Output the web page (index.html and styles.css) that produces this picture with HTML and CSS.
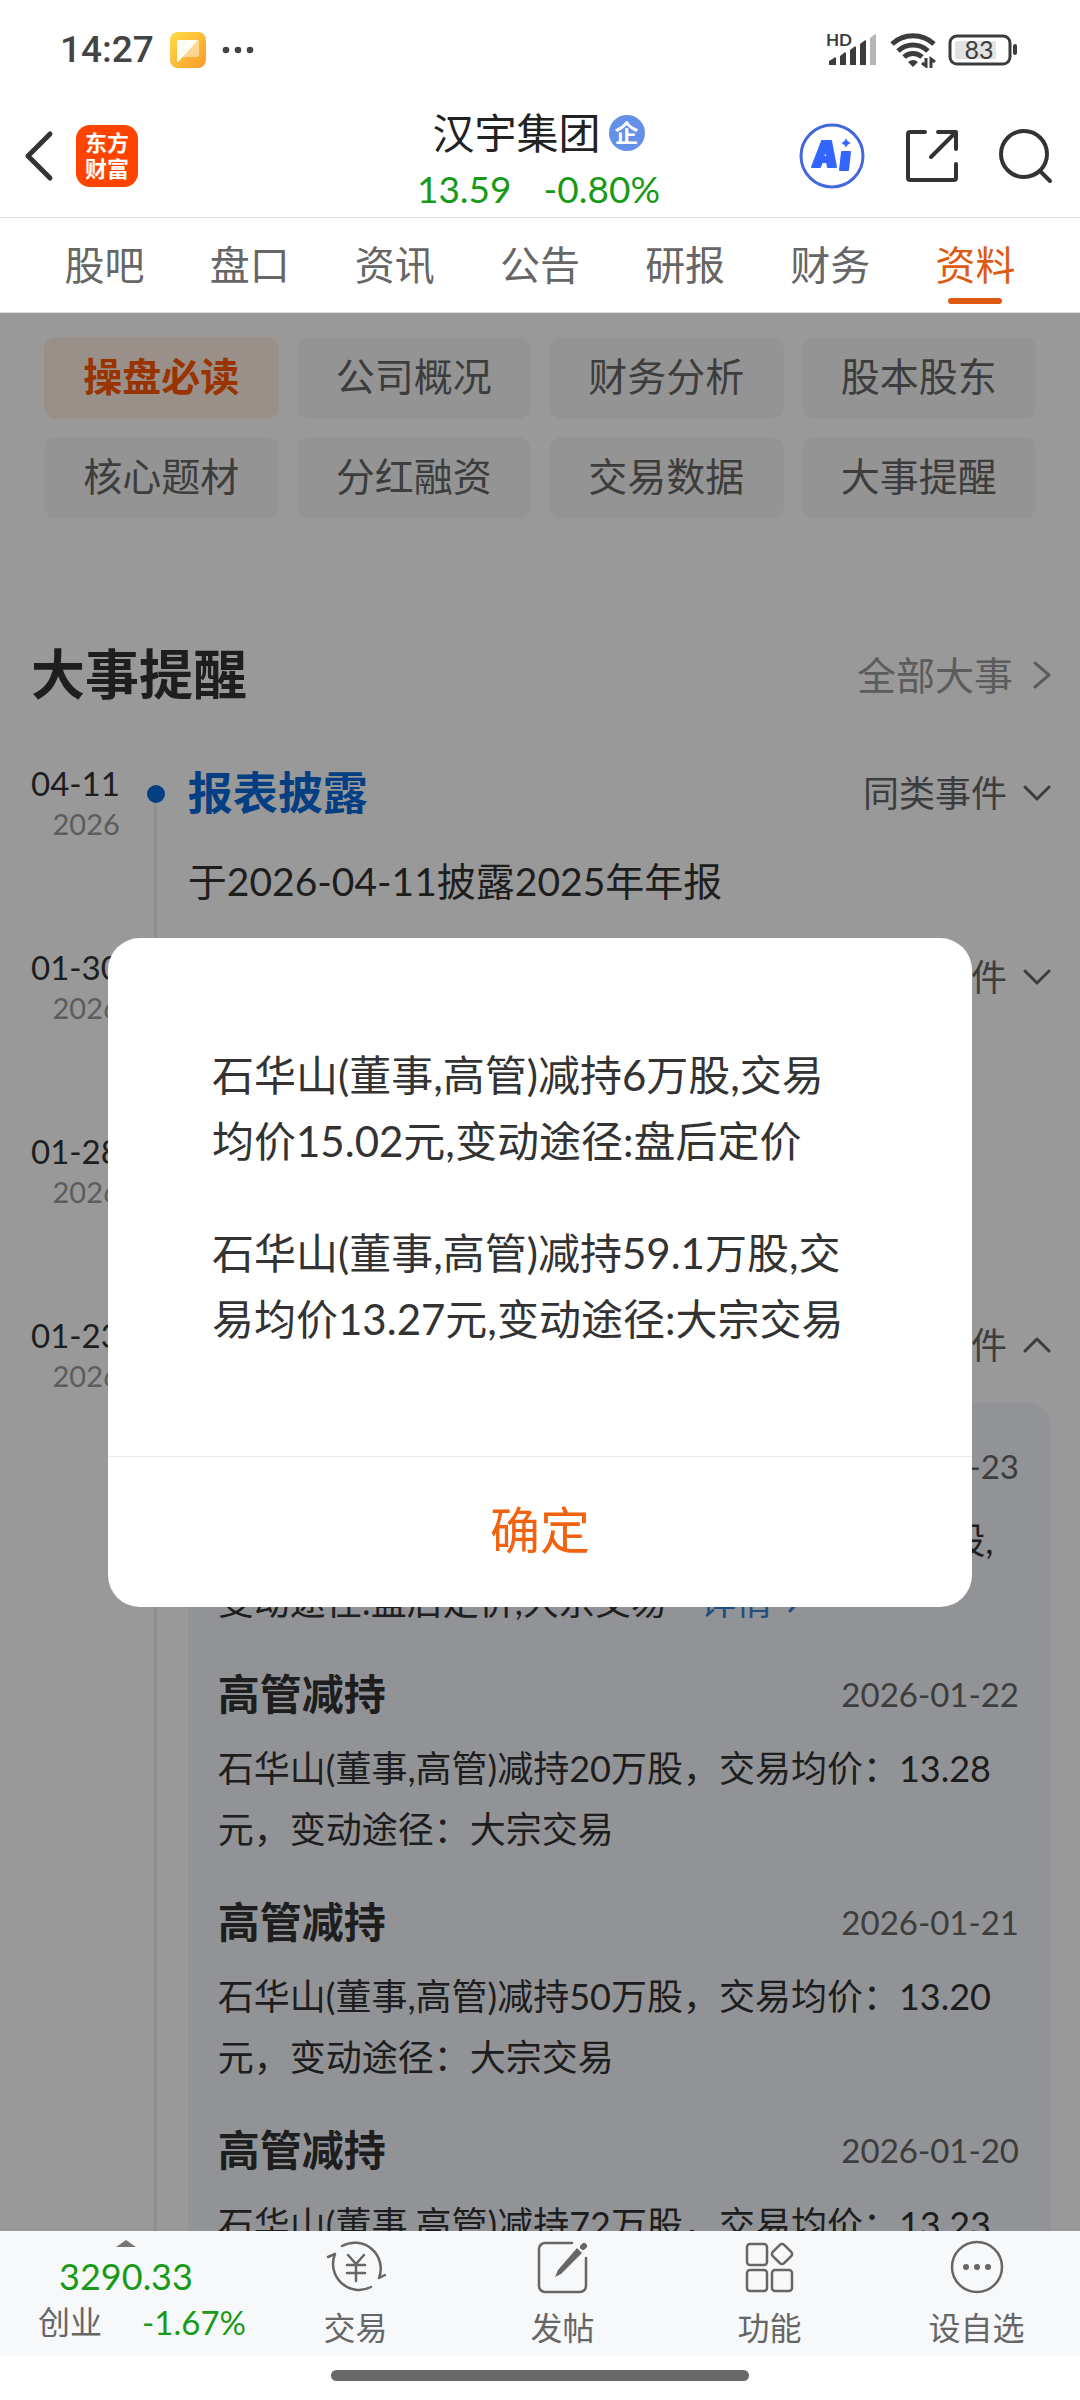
FILE: index.html
```
<!DOCTYPE html>
<html lang="zh-CN">
<head>
    <meta charset="UTF-8">
    <meta name="viewport" content="width=device-width, initial-scale=1.0">
    <title>汉宇集团 - 资料</title>
    <link rel="stylesheet" href="styles.css">
</head>
<body>
    <div class="status-bar">
        <span class="clock">14:27</span>
        <svg class="app-icon" width="36" height="36" viewBox="0 0 36 36">
            <defs>
                <linearGradient id="noteBg" x1="0" y1="0" x2="1" y2="1">
                    <stop offset="0" stop-color="#fddc45"/>
                    <stop offset="1" stop-color="#fd9a2b"/>
                </linearGradient>
            </defs>
            <rect width="36" height="36" rx="8" fill="url(#noteBg)"/>
            <path d="M9 8h18a2 2 0 0 1 2 2v13a2 2 0 0 1-2 2H13l-4 4a1 1 0 0 1-2-1V10a2 2 0 0 1 2-2z" fill="#fff" opacity=".45"/>
            <path d="M9 8h19L9 29a1 1 0 0 1-2-1V10a2 2 0 0 1 2-2z" fill="#fff" opacity=".9"/>
        </svg>
        <svg width="32" height="8" viewBox="0 0 32 8" fill="#444">
            <circle cx="4" cy="4" r="3.3"/><circle cx="16" cy="4" r="3.3"/><circle cx="28" cy="4" r="3.3"/>
        </svg>
        <div class="status-right">
            <svg width="52" height="36" viewBox="0 0 52 36" fill="#3c3c3c">
                <text x="0" y="14" font-size="17" font-weight="700">HD</text>
                <path d="M3 29l5-3a1 1 0 0 1 2 1v6H3z"/>
                <path d="M14 24l4-3a1 1 0 0 1 2 1v11h-6z"/>
                <path d="M24 18l4-3a1 1 0 0 1 2 1v17h-6z"/>
                <path d="M34 12l4-3a1 1 0 0 1 2 1v23h-6z"/>
                <path d="M44 6l4-3a1 1 0 0 1 2 1v29h-6z" fill="#b5b5b5"/>
            </svg>
            <svg width="46" height="36" viewBox="0 0 46 36" fill="none" stroke="#3c3c3c" stroke-width="5">
                <path d="M2 12a31 31 0 0 1 42 0"/>
                <path d="M8 19a22 22 0 0 1 30 0"/>
                <path d="M14 25a13 13 0 0 1 18 0"/>
                <path d="M18 30q5-4 10 0l-5 5z" fill="#3c3c3c" stroke="none"/>
                <path d="M32 31l4 3V26M45 30l-4-3V36" stroke-width="3"/>
            </svg>
            <svg width="70" height="32" viewBox="0 0 70 32">
                <rect x="2" y="2" width="60" height="28" rx="7" fill="none" stroke="#3c3c3c" stroke-width="3"/>
                <rect x="7" y="7" width="41" height="18" rx="2" fill="#e2e2e2"/>
                <rect x="65" y="10" width="4" height="11" rx="2" fill="#3c3c3c"/>
                <text x="31" y="25" font-size="25" text-anchor="middle" fill="#3c3c3c">83</text>
            </svg>
        </div>
    </div>

    <header class="header">
        <div class="header-left">
            <button type="button" class="icon-btn" aria-label="返回">
                <svg width="30" height="52" viewBox="0 0 30 52" fill="none" stroke="#333" stroke-width="5" stroke-linecap="round" stroke-linejoin="round">
                    <path d="M26 4L4 26l22 22"/>
                </svg>
            </button>
            <a href="#" class="logo"><span>东方</span><span>财富</span></a>
        </div>
        <div class="stock">
            <h1 class="stock-name">汉宇集团<span class="badge">企</span></h1>
            <div class="stock-price"><span>13.59</span><span>-0.80%</span></div>
        </div>
        <div class="header-right">
            <button type="button" class="icon-btn" aria-label="AI">
                <svg width="66" height="68" viewBox="0 0 66 68">
                    <circle cx="33" cy="34" r="31" fill="none" stroke="#4468e0" stroke-width="3"/>
                    <path d="M23 19h9l5 26h-8l-1-5h-5l-2 5h-8zM27 27l-3 8h4zM43 30h8l-2 18h-8z" fill="#3366ff" fill-rule="evenodd" stroke="#3366ff" stroke-width="2" stroke-linejoin="round"/>
                    <path d="M47 16q1 4 5 5q-4 1-5 5q-1-4-5-5q4-1 5-5z" fill="#3366ff"/>
                </svg>
            </button>
            <button type="button" class="icon-btn" aria-label="分享">
                <svg width="54" height="54" viewBox="0 0 54 54" fill="none" stroke="#333" stroke-width="4" stroke-linecap="round" stroke-linejoin="round">
                    <path d="M20 3H5a2 2 0 0 0-2 2v44a2 2 0 0 0 2 2h44a2 2 0 0 0 2-2V35"/>
                    <path d="M33 3h18v17M51 3L26 28"/>
                </svg>
            </button>
            <button type="button" class="icon-btn" aria-label="搜索">
                <svg width="54" height="56" viewBox="0 0 54 56" fill="none" stroke="#333" stroke-width="4" stroke-linecap="round">
                    <circle cx="25" cy="26" r="23"/>
                    <path d="M41 43l10 10"/>
                </svg>
            </button>
        </div>
    </header>

    <nav class="tabs">
        <a href="#">股吧</a>
        <a href="#">盘口</a>
        <a href="#">资讯</a>
        <a href="#">公告</a>
        <a href="#">研报</a>
        <a href="#">财务</a>
        <a href="#" class="active">资料</a>
    </nav>

    <main class="content">
        <div class="chips">
            <button type="button" class="chip active">操盘必读</button>
            <button type="button" class="chip">公司概况</button>
            <button type="button" class="chip">财务分析</button>
            <button type="button" class="chip">股本股东</button>
            <button type="button" class="chip">核心题材</button>
            <button type="button" class="chip">分红融资</button>
            <button type="button" class="chip">交易数据</button>
            <button type="button" class="chip">大事提醒</button>
        </div>

        <div class="section-head">
            <h2>大事提醒</h2>
            <a href="#" class="more">全部大事
                <svg width="18" height="28" viewBox="0 0 18 28" class="stroke-icon"><path d="M2 2l14 12L2 26"/></svg>
            </a>
        </div>

        <ol class="timeline">
            <li class="event">
                <div class="event-date"><time>04-11</time><small>2026</small></div>
                <div class="axis"></div>
                <div class="event-body">
                    <div class="event-head">
                        <h3>报表披露</h3>
                        <button type="button" class="toggle">同类事件
                            <svg width="28" height="18" viewBox="0 0 28 18" class="stroke-icon"><path d="M2 3l12 12L26 3"/></svg>
                        </button>
                    </div>
                    <p>于2026-04-11披露2025年年报</p>
                </div>
            </li>
            <li class="event">
                <div class="event-date"><time>01-30</time><small>2026</small></div>
                <div class="axis"></div>
                <div class="event-body">
                    <div class="event-head">
                        <h3>业绩预告</h3>
                        <button type="button" class="toggle">同类事件
                            <svg width="28" height="18" viewBox="0 0 28 18" class="stroke-icon"><path d="M2 3l12 12L26 3"/></svg>
                        </button>
                    </div>
                    <p>披露2025年年报业绩预告</p>
                </div>
            </li>
            <li class="event">
                <div class="event-date"><time>01-28</time><small>2026</small></div>
                <div class="axis"></div>
                <div class="event-body">
                    <div class="event-head"><h3>股东大会</h3></div>
                    <p>召开临时股东大会</p>
                </div>
            </li>
            <li class="event">
                <div class="event-date"><time>01-23</time><small>2026</small></div>
                <div class="axis"></div>
                <div class="event-body">
                    <div class="event-head">
                        <h3>高管减持</h3>
                        <button type="button" class="toggle">同类事件
                            <svg width="28" height="18" viewBox="0 0 28 18" class="stroke-icon"><path d="M2 15L14 3l12 12"/></svg>
                        </button>
                    </div>
                    <div class="panel">
                        <article>
                            <header><h4>高管减持</h4><time>2026-01-23</time></header>
                            <p>石华山(董事,高管)当日通过2种途径减持65.1万股,<br>变动途径:盘后定价,大宗交易
                                <a href="#" class="detail">详情
                                    <svg width="12" height="22" viewBox="0 0 12 22" class="stroke-icon"><path d="M2 2l8 9-8 9"/></svg>
                                </a>
                            </p>
                        </article>
                        <article>
                            <header><h4>高管减持</h4><time>2026-01-22</time></header>
                            <p>石华山(董事,高管)减持20万股，交易均价：13.28元，变动途径：大宗交易</p>
                        </article>
                        <article>
                            <header><h4>高管减持</h4><time>2026-01-21</time></header>
                            <p>石华山(董事,高管)减持50万股，交易均价：13.20元，变动途径：大宗交易</p>
                        </article>
                        <article>
                            <header><h4>高管减持</h4><time>2026-01-20</time></header>
                            <p>石华山(董事,高管)减持72万股，交易均价：13.23元，变动途径：大宗交易</p>
                        </article>
                    </div>
                </div>
            </li>
        </ol>

        <div class="overlay">
            <div class="dialog" role="dialog" aria-modal="true">
                <div class="dialog-text">
                    <p>石华山(董事,高管)减持6万股,交易均价15.02元,变动途径:盘后定价</p>
                    <p>石华山(董事,高管)减持59.1万股,交易均价13.27元,变动途径:大宗交易</p>
                </div>
                <button type="button" class="confirm">确定</button>
            </div>
        </div>
    </main>

    <footer class="bottom-bar">
        <a href="#" class="index">
            <svg width="20" height="7" viewBox="0 0 20 7"><path d="M10 0l10 7H0z" fill="#777"/></svg>
            <strong>3290.33</strong>
            <span class="index-row"><span>创业</span><em>-1.67%</em></span>
        </a>
        <a href="#" class="bar-item">
            <svg width="60" height="56" viewBox="0 0 60 56" fill="none" stroke="#666" stroke-width="2.500" stroke-linecap="round" stroke-linejoin="round">
                <path d="M16 7A26 26 0 0 1 53 39l6-3"/>
                <path d="M45 48A26 26 0 0 1 9 15l-7 3"/>
                <path d="M22 16l8 9 8-9M21 26h18M21 34h18M30 26v16"/>
            </svg>
            交易
        </a>
        <a href="#" class="bar-item">
            <svg width="56" height="56" viewBox="0 0 56 56" fill="none" stroke="#666" stroke-width="2.500" stroke-linecap="round" stroke-linejoin="round">
                <path d="M37 4H10a6 6 0 0 0-6 6v37a6 6 0 0 0 6 6h35a6 6 0 0 0 6-6V19"/>
                <path d="M42 9l5 5-21 21-6 3 3-7z" fill="#666" stroke="none"/>
                <path d="M48 8l1-1" stroke-width="6"/>
            </svg>
            发帖
        </a>
        <a href="#" class="bar-item">
            <svg width="50" height="56" viewBox="0 0 50 56" fill="none" stroke="#666" stroke-width="2.500" stroke-linejoin="round">
                <rect x="2" y="5" width="20" height="21" rx="3"/>
                <rect x="2" y="31" width="20" height="21" rx="3"/>
                <rect x="27" y="31" width="20" height="21" rx="3"/>
                <rect x="29" y="7" width="16" height="16" rx="3" transform="rotate(45 37 15)"/>
            </svg>
            功能
        </a>
        <a href="#" class="bar-item">
            <svg width="54" height="56" viewBox="0 0 54 56" fill="none" stroke="#666" stroke-width="2.500">
                <circle cx="27" cy="28" r="25"/>
                <g fill="#666" stroke="none"><circle cx="16" cy="28" r="3"/><circle cx="27" cy="28" r="3"/><circle cx="38" cy="28" r="3"/></g>
            </svg>
            设自选
        </a>
    </footer>
    <div class="gesture"><div class="gesture-pill"></div></div>
</body>
</html>
```
FILE: styles.css
```
:root {
    --text-color: #333;
    --text-secondary: #666;
    --text-muted: #999;
    --green: #189a18;
    --orange: #dd5a10;
}

* {
    margin: 0;
    padding: 0;
    box-sizing: border-box;
}

body {
    font-family: Lato, "Noto Sans CJK SC", sans-serif;
    line-height: 1.4;
    background-color: white;
    color: var(--text-color);
    height: 100vh;
    display: flex;
    flex-direction: column;
    overflow: hidden;
}

a {
    color: inherit;
    text-decoration: none;
}

button {
    font-family: inherit;
    line-height: inherit;
    color: inherit;
    background: none;
    border: none;
    cursor: pointer;
}

svg {
    display: block;
    flex-shrink: 0;
}

.stroke-icon {
    fill: none;
    stroke: currentColor;
    stroke-width: 3;
    stroke-linecap: round;
    stroke-linejoin: round;
}

/* status bar */
.status-bar {
    display: flex;
    align-items: center;
    height: 100px;
    padding: 0 62px 0 60px;
    flex-shrink: 0;
}

.clock {
    font-family: Roboto, sans-serif;
    font-size: 37px;
    font-weight: 500;
    color: #444;
}

.app-icon {
    margin: 0 16px;
}

.status-right {
    display: flex;
    align-items: center;
    gap: 12px;
    margin-left: auto;
}

/* header */
.header {
    display: grid;
    grid-template-columns: 1fr auto 1fr;
    align-items: center;
    height: 118px;
    padding: 0 27px 0 24px;
    border-bottom: 1px solid #ddd;
    flex-shrink: 0;
}

.header-left {
    display: flex;
    align-items: center;
    gap: 22px;
    padding-bottom: 5px;
}

.header-right {
    display: flex;
    align-items: center;
    justify-content: flex-end;
    gap: 40px;
    padding-bottom: 5px;
}

.logo {
    display: flex;
    flex-direction: column;
    align-items: center;
    justify-content: center;
    width: 62px;
    height: 62px;
    border-radius: 14px;
    background-color: #ff4400;
    color: white;
    font-size: 22px;
    font-weight: 700;
    line-height: 26px;
}

.stock {
    padding-top: 5px;
    text-align: center;
}

.stock-name {
    display: flex;
    align-items: center;
    justify-content: center;
    gap: 8px;
    font-size: 42px;
    font-weight: 400;
    line-height: 56px;
    color: #222;
}

.badge {
    width: 36px;
    height: 36px;
    border-radius: 50%;
    background-color: #6490e8;
    color: white;
    font-size: 24px;
    font-weight: 700;
    line-height: 36px;
}

.stock-price {
    display: flex;
    justify-content: center;
    gap: 32px;
    font-size: 37px;
    line-height: 56px;
    color: var(--green);
}

/* tabs */
.tabs {
    display: grid;
    grid-template-columns: repeat(7, 1fr);
    height: 95px;
    padding: 0 32px;
    border-bottom: 1px solid #ddd;
    flex-shrink: 0;
}

.tabs a {
    display: flex;
    flex-direction: column;
    align-items: center;
    font-size: 40px;
    line-height: 94px;
    color: var(--text-secondary);
}

.tabs .active {
    color: var(--orange);
}

.tabs .active::after {
    content: "";
    width: 54px;
    height: 6px;
    margin-top: -14px;
    border-radius: 3px;
    background-color: var(--orange);
    flex-shrink: 0;
}

/* content */
.content {
    position: relative;
    flex: 1;
    min-height: 0;
    overflow: hidden;
}

.chips {
    display: grid;
    grid-template-columns: repeat(4, 1fr);
    gap: 18px;
    padding: 24px 44px 0;
}

.chip {
    height: 82px;
    padding-bottom: 4px;
    border-radius: 12px;
    background-color: #f7f7f7;
    color: var(--text-secondary);
    font-size: 39px;
}

.chip.active {
    background-color: #fff0e5;
    color: #ff5500;
    font-weight: 700;
}

.section-head {
    display: flex;
    align-items: center;
    justify-content: space-between;
    margin-top: 116px;
    padding: 0 29px 0 31px;
}

.section-head h2 {
    font-size: 54px;
    line-height: 80px;
}

.more {
    display: flex;
    align-items: center;
    gap: 20px;
    font-size: 39px;
    color: var(--text-muted);
}

.timeline {
    list-style: none;
    margin-top: 41px;
    padding: 0 29px 0 31px;
}

.event {
    display: flex;
}

.event-date {
    display: flex;
    flex-direction: column;
    align-items: flex-end;
    margin-right: 27px;
    white-space: nowrap;
}

.event-date time {
    font-size: 33px;
    line-height: 54px;
}

.event-date small {
    font-size: 29px;
    line-height: 28px;
    color: var(--text-muted);
}

.axis {
    display: flex;
    justify-content: center;
    width: 18px;
    margin-right: 23px;
    background: linear-gradient(#eee, #eee) center / 3px 100% no-repeat;
    flex-shrink: 0;
}

.event:first-child .axis {
    background-position: center 29px;
}

.axis::before {
    content: "";
    width: 18px;
    height: 18px;
    margin-top: 29px;
    border-radius: 50%;
    background-color: #066ad9;
}

.event-body {
    flex: 1;
    padding-bottom: 29px;
}

.event-head {
    display: flex;
    align-items: center;
    justify-content: space-between;
    height: 74px;
    margin-bottom: 21px;
}

.event-head h3 {
    font-size: 45px;
    color: #066ad9;
}

.toggle {
    display: flex;
    align-items: center;
    gap: 16px;
    font-size: 36px;
    color: var(--text-secondary);
}

.event-body > p {
    font-size: 39px;
    line-height: 60px;
}

.panel {
    padding: 33px 32px 33px 30px;
    border-radius: 24px;
    background-color: #f4f6fa;
}

.panel article {
    margin-bottom: 32px;
}

.panel header {
    display: flex;
    align-items: center;
    justify-content: space-between;
    height: 60px;
    margin-bottom: 14px;
}

.panel h4 {
    font-size: 42px;
}

.panel time {
    font-size: 33px;
    color: var(--text-secondary);
}

.panel p {
    font-size: 36px;
    line-height: 61px;
}

.detail {
    display: inline-flex;
    align-items: center;
    gap: 16px;
    margin-left: 24px;
    color: #3a80d8;
}

/* dialog */
.overlay {
    position: absolute;
    inset: 0;
    display: flex;
    align-items: center;
    justify-content: center;
    background-color: rgba(0, 0, 0, 0.4);
}

.dialog {
    width: 80%;
    border-radius: 32px;
    background-color: white;
    overflow: hidden;
}

.dialog-text {
    display: flex;
    flex-direction: column;
    gap: 46px;
    padding: 104px 120px 104px 104px;
    font-size: 42px;
    line-height: 66px;
}

.confirm {
    width: 100%;
    height: 151px;
    padding-bottom: 4px;
    border-top: 1px solid #e8e8e8;
    font-size: 50px;
    color: #f2620f;
}

/* bottom bar */
.bottom-bar {
    display: flex;
    height: 125px;
    background-color: #f7f8fa;
    color: var(--text-secondary);
    flex-shrink: 0;
}

.index {
    display: flex;
    flex-direction: column;
    align-items: center;
    width: 252px;
    padding-top: 9px;
}

.index strong {
    font-size: 36px;
    font-weight: 400;
    line-height: 58px;
    color: var(--green);
}

.index-row {
    display: flex;
    align-items: center;
    justify-content: space-between;
    align-self: stretch;
    padding: 0 6px 0 38px;
    font-size: 32px;
    line-height: 34px;
}

.index-row em {
    font-size: 33px;
    font-style: normal;
    color: var(--green);
}

.bar-item {
    display: flex;
    flex: 1;
    flex-direction: column;
    align-items: center;
    gap: 8px;
    padding-top: 8px;
    font-size: 32px;
    line-height: 50px;
}

.gesture {
    display: flex;
    align-items: center;
    justify-content: center;
    height: 44px;
    padding-bottom: 6px;
    flex-shrink: 0;
}

.gesture-pill {
    width: 418px;
    height: 11px;
    border-radius: 6px;
    background-color: #686868;
}
```
